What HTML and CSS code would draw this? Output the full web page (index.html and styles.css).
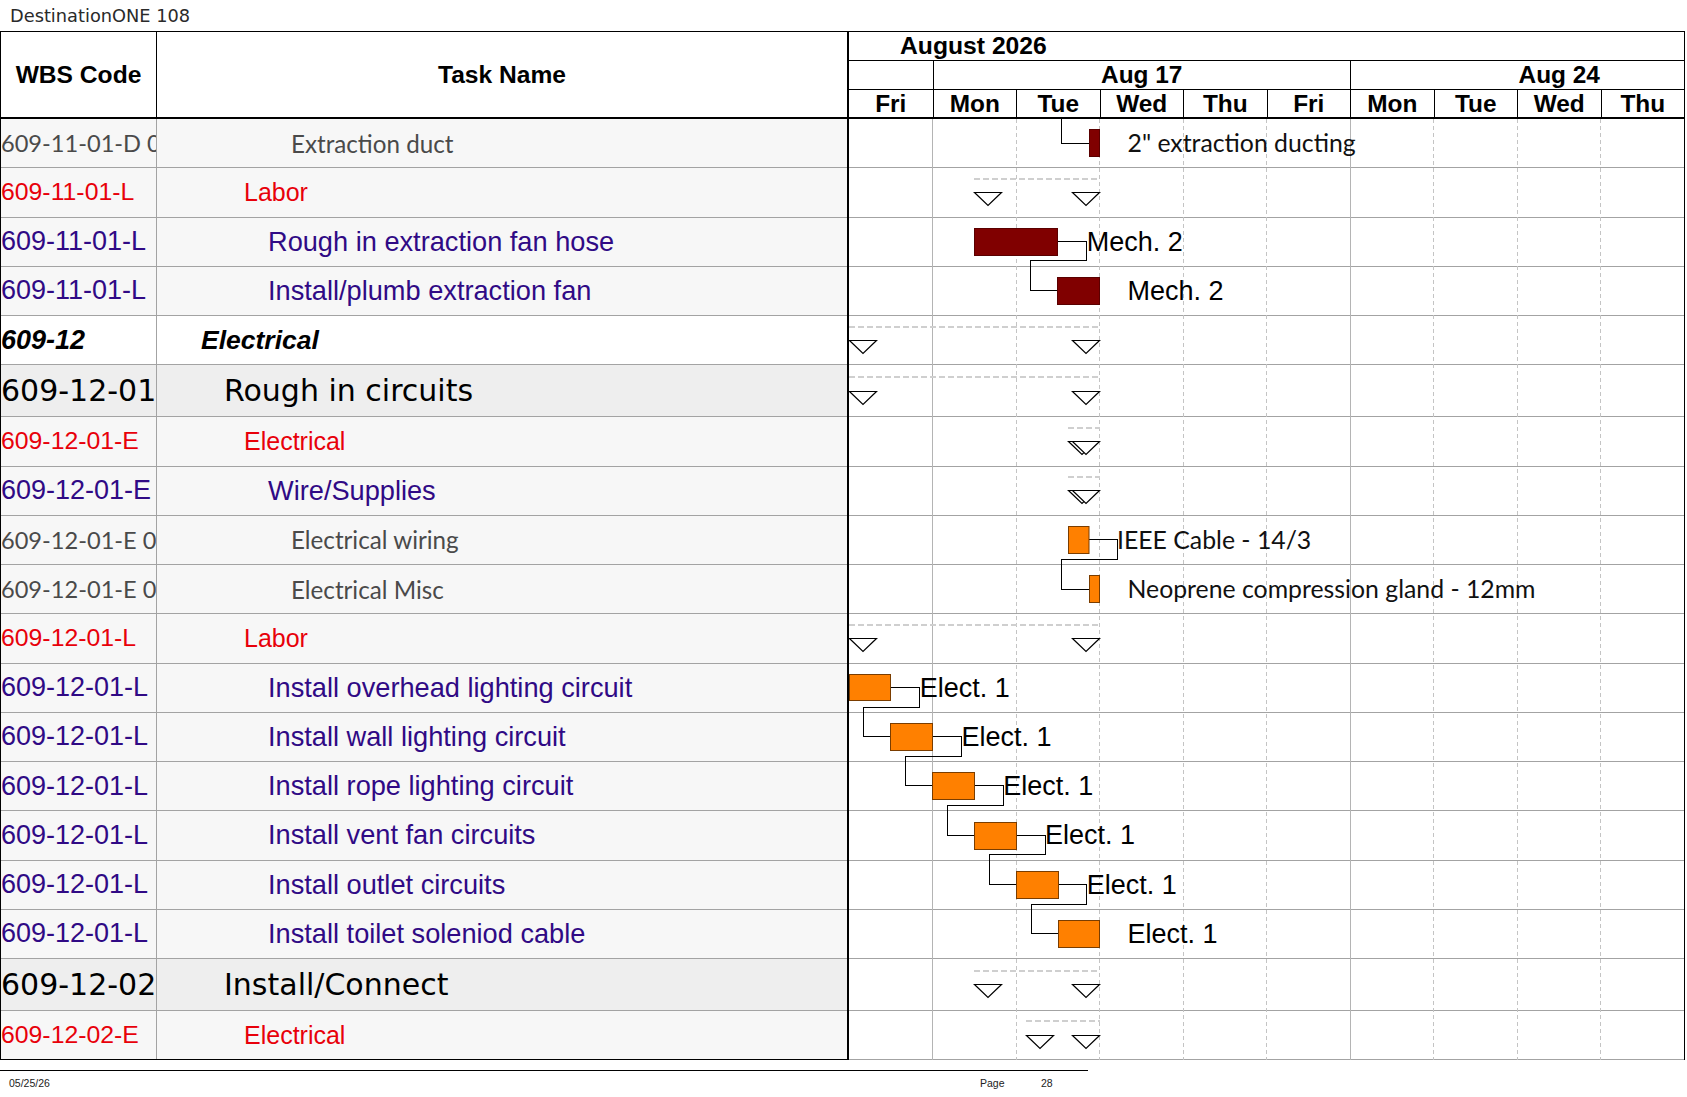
FILE: index.html
```html
<!DOCTYPE html>
<html lang="en">
<head>
<meta charset="utf-8">
<title>DestinationONE 108</title>
<link rel="stylesheet" href="styles.css">
</head>
<body>
<div class="title">DestinationONE 108</div>
<div class="sheet">
  <div class="left">
    <div class="lhead">
      <div class="hwbs">WBS Code</div>
      <div class="htask">Task Name</div>
    </div>
    <div class="row detail"><div class="wbs">609-11-01-D 001</div><div class="task">Extraction duct</div></div>
    <div class="row red"><div class="wbs">609-11-01-L</div><div class="task">Labor</div></div>
    <div class="row purple"><div class="wbs">609-11-01-L</div><div class="task">Rough in extraction fan hose</div></div>
    <div class="row purple"><div class="wbs">609-11-01-L</div><div class="task">Install/plumb extraction fan</div></div>
    <div class="row group"><div class="wbs">609-12</div><div class="task">Electrical</div></div>
    <div class="row big"><div class="wbs">609-12-01</div><div class="task">Rough in circuits</div></div>
    <div class="row red"><div class="wbs">609-12-01-E</div><div class="task">Electrical</div></div>
    <div class="row purple"><div class="wbs">609-12-01-E</div><div class="task">Wire/Supplies</div></div>
    <div class="row detail"><div class="wbs">609-12-01-E 001</div><div class="task">Electrical wiring</div></div>
    <div class="row detail"><div class="wbs">609-12-01-E 002</div><div class="task">Electrical Misc</div></div>
    <div class="row red"><div class="wbs">609-12-01-L</div><div class="task">Labor</div></div>
    <div class="row purple"><div class="wbs">609-12-01-L</div><div class="task">Install overhead lighting circuit</div></div>
    <div class="row purple"><div class="wbs">609-12-01-L</div><div class="task">Install wall lighting circuit</div></div>
    <div class="row purple"><div class="wbs">609-12-01-L</div><div class="task">Install rope lighting circuit</div></div>
    <div class="row purple"><div class="wbs">609-12-01-L</div><div class="task">Install vent fan circuits</div></div>
    <div class="row purple"><div class="wbs">609-12-01-L</div><div class="task">Install outlet circuits</div></div>
    <div class="row purple"><div class="wbs">609-12-01-L</div><div class="task">Install toilet soleniod cable</div></div>
    <div class="row big"><div class="wbs">609-12-02</div><div class="task">Install/Connect</div></div>
    <div class="row red"><div class="wbs">609-12-02-E</div><div class="task">Electrical</div></div>
  </div>

  <div class="gantt">
    <div class="ghead">
      <div class="month">August 2026</div>
      <div class="weeks">
        <div class="wk w1"></div>
        <div class="wk w5">Aug 17</div>
        <div class="wk w5">Aug 24</div>
      </div>
      <div class="days">
        <div class="day">Fri</div><div class="day">Mon</div><div class="day">Tue</div><div class="day">Wed</div><div class="day">Thu</div>
        <div class="day">Fri</div><div class="day">Mon</div><div class="day">Tue</div><div class="day">Wed</div><div class="day">Thu</div>
      </div>
    </div>
    <div class="gbody">
      <div class="grow"></div><div class="grow"></div><div class="grow"></div><div class="grow"></div>
      <div class="grow"></div><div class="grow big"></div><div class="grow"></div><div class="grow"></div>
      <div class="grow"></div><div class="grow"></div><div class="grow"></div><div class="grow"></div>
      <div class="grow"></div><div class="grow"></div><div class="grow"></div><div class="grow"></div>
      <div class="grow"></div><div class="grow big"></div><div class="grow"></div>

      <svg class="chart" width="835" height="941" viewBox="0 0 835 941" xmlns="http://www.w3.org/2000/svg">
        <g class="grid-solid">
          <line x1="83.5" y1="0" x2="83.5" y2="941"/>
          <line x1="501.5" y1="0" x2="501.5" y2="941"/>
        </g>
        <g class="grid-dash">
          <line x1="167.5" y1="0" x2="167.5" y2="941"/>
          <line x1="250.5" y1="0" x2="250.5" y2="941"/>
          <line x1="334.5" y1="0" x2="334.5" y2="941"/>
          <line x1="417.5" y1="0" x2="417.5" y2="941"/>
          <line x1="584.5" y1="0" x2="584.5" y2="941"/>
          <line x1="668.5" y1="0" x2="668.5" y2="941"/>
          <line x1="751.5" y1="0" x2="751.5" y2="941"/>
        </g>

        <g class="sumline">
          <line x1="125" y1="60" x2="251" y2="60"/>
          <line x1="0" y1="208" x2="251" y2="208"/>
          <line x1="0" y1="258" x2="251" y2="258"/>
          <line x1="219" y1="309" x2="251" y2="309"/>
          <line x1="219" y1="358" x2="251" y2="358"/>
          <line x1="0" y1="506" x2="251" y2="506"/>
          <line x1="125" y1="852" x2="251" y2="852"/>
          <line x1="177" y1="902" x2="251" y2="902"/>
        </g>
        <g class="tri">
          <polygon points="125.5,73.5 152.5,73.5 139,86.5"/>
          <polygon points="223.5,73.5 250.5,73.5 237,86.5"/>
          <polygon points="0.5,221.5 27.5,221.5 14,234.5"/>
          <polygon points="223.5,221.5 250.5,221.5 237,234.5"/>
          <polygon points="0.5,272.5 27.5,272.5 14,285.5"/>
          <polygon points="223.5,272.5 250.5,272.5 237,285.5"/>
          <polygon points="219.5,322.5 246.5,322.5 233,335.5"/>
          <polygon points="223.5,322.5 250.5,322.5 237,335.5"/>
          <polygon points="219.5,371.5 246.5,371.5 233,384.5"/>
          <polygon points="223.5,371.5 250.5,371.5 237,384.5"/>
          <polygon points="0.5,519.5 27.5,519.5 14,532.5"/>
          <polygon points="223.5,519.5 250.5,519.5 237,532.5"/>
          <polygon points="125.5,865.5 152.5,865.5 139,878.5"/>
          <polygon points="223.5,865.5 250.5,865.5 237,878.5"/>
          <polygon points="177.5,916.5 204.5,916.5 191,929.5"/>
          <polygon points="223.5,916.5 250.5,916.5 237,929.5"/>
        </g>

        <g class="link">
          <polyline points="212.5,0 212.5,24.5 240.5,24.5"/>
          <polyline points="208.5,122.5 237.5,122.5 237.5,141.5 181.5,141.5 181.5,171.5 208.5,171.5"/>
          <polyline points="240,420.5 268.5,420.5 268.5,440.5 212.5,440.5 212.5,470.5 240.5,470.5"/>
          <polyline points="41.5,568.5 70.5,568.5 70.5,588.5 14.5,588.5 14.5,617.5 41.5,617.5"/>
          <polyline points="83.5,617.5 112.5,617.5 112.5,637.5 56.5,637.5 56.5,666.5 83.5,666.5"/>
          <polyline points="125.5,666.5 154.5,666.5 154.5,686.5 98.5,686.5 98.5,716.5 125.5,716.5"/>
          <polyline points="167.5,716.5 196.5,716.5 196.5,735.5 140.5,735.5 140.5,765.5 167.5,765.5"/>
          <polyline points="209.5,765.5 237.5,765.5 237.5,785.5 182.5,785.5 182.5,814.5 209.5,814.5"/>
        </g>

        <g class="bar-red">
          <rect x="240.5" y="10.5" width="10" height="27"/>
          <rect x="125.5" y="109.5" width="83" height="27"/>
          <rect x="208.5" y="158.5" width="42" height="27"/>
        </g>
        <g class="bar-orange">
          <rect x="219.5" y="407.5" width="20.5" height="27"/>
          <rect x="240.5" y="456.5" width="10" height="27"/>
          <rect x="0.5" y="555.5" width="41" height="26"/>
          <rect x="41.5" y="604.5" width="42" height="27"/>
          <rect x="83.5" y="653.5" width="42" height="27"/>
          <rect x="125.5" y="703.5" width="42" height="27"/>
          <rect x="167.5" y="752.5" width="42" height="27"/>
          <rect x="209.5" y="801.5" width="41" height="27"/>
        </g>
      </svg>

      <span class="lbl cal" style="left:278.5px;top:0px">2" extraction ducting</span>
      <span class="lbl" style="left:237.75px;top:98.5px">Mech. 2</span>
      <span class="lbl" style="left:278.5px;top:147.75px">Mech. 2</span>
      <span class="lbl cal" style="left:268px;top:396.75px">IEEE Cable - 14/3</span>
      <span class="lbl cal" style="left:278.5px;top:446px">Neoprene compression gland - 12mm</span>
      <span class="lbl" style="left:70.75px;top:544.5px">Elect. 1</span>
      <span class="lbl" style="left:112.5px;top:593.75px">Elect. 1</span>
      <span class="lbl" style="left:154.25px;top:643px">Elect. 1</span>
      <span class="lbl" style="left:196px;top:692.25px">Elect. 1</span>
      <span class="lbl" style="left:237.75px;top:741.5px">Elect. 1</span>
      <span class="lbl" style="left:278.5px;top:790.75px">Elect. 1</span>
    </div>
  </div>
</div>
<div class="footer">
  <span class="fdate">05/25/26</span>
  <span class="fpage">Page</span>
  <span class="fnum">28</span>
</div>
</body>
</html>
```

FILE: styles.css
```css
* { box-sizing: border-box; }
html, body { margin: 0; padding: 0; background: #fff; overflow: hidden; }
body {
  width: 1687px;
  height: 1097px;
  font-family: "Liberation Sans", Arial, sans-serif;
  color: #000;
}

.title {
  height: 31px;
  padding-left: 10px;
  font-family: "DejaVu Sans", sans-serif;
  font-size: 17.8px;
  line-height: 31px;
  color: #2a2a2a;
}

.sheet {
  display: flex;
  width: 1685px;
  border-top: 1px solid #000;
}

/* ---------- left table ---------- */
.left {
  width: 847px;
  border-left: 1px solid #000;
}
.lhead {
  display: flex;
  height: 87px;
  border-bottom: 2px solid #000;
  background: #fff;
  font-weight: bold;
  font-size: 24.6px;
}
.hwbs {
  width: 156px;
  border-right: 1px solid #000;
  display: flex;
  align-items: center;
  justify-content: center;
}
.htask {
  flex: 1;
  display: flex;
  align-items: center;
  justify-content: center;
}

.row {
  display: flex;
  height: 49.25px;
  border-bottom: 1px solid #a3a3a3;
  background: #f7f7f7;
  white-space: nowrap;
}
.row:last-child { border-bottom-color: #000; }
.wbs {
  width: 156px;
  flex: none;
  border-right: 1px solid #a3a3a3;
  display: flex;
  align-items: center;
  overflow: hidden;
}
.task {
  flex: 1;
  display: flex;
  align-items: center;
  overflow: hidden;
}

.row.detail { color: #4a4a4a; font-family: Lato, "Open Sans", sans-serif; }
.row.detail .wbs { font-size: 23.6px; }
.row.detail .task { font-size: 24.2px; padding-left: 134px; }

.row.red { color: #e8000a; }
.row.red .wbs { font-size: 24.8px; }
.row.red .task { font-size: 25px; padding-left: 87px; }

.row.purple { color: #300a85; }
.row.purple .wbs { font-size: 27px; }
.row.purple .task { font-size: 27.2px; padding-left: 111px; }

.row.group { background: #fff; font-weight: bold; font-style: italic; }
.row.group .wbs { font-size: 27px; }
.row.group .task { font-size: 26.5px; padding-left: 44px; }

.row.big { height: 52px; background: #eeeeee; font-family: "DejaVu Sans", sans-serif; font-size: 30px; }
.row.big .task { padding-left: 67px; }

/* ---------- gantt ---------- */
.gantt {
  width: 838px;
  border-left: 2px solid #000;
  border-right: 1px solid #000;
}
.ghead {
  font-weight: bold;
  font-size: 24.4px;
}
.month {
  height: 29px;
  line-height: 28px;
  padding-left: 51px;
  border-bottom: 1px solid #000;
  font-size: 24.7px;
}
.weeks {
  display: flex;
  height: 29px;
  border-bottom: 1px solid #000;
  overflow: hidden;
}
.wk {
  flex: none;
  line-height: 28px;
  text-align: center;
}
.wk.w1 { width: 83.5px; }
.wk.w5 { width: 417.5px; border-left: 1px solid #000; }
.days {
  display: flex;
  height: 29px;
  border-bottom: 2px solid #000;
}
.day {
  flex: none;
  width: 83.5px;
  line-height: 27px;
  text-align: center;
}
.day + .day { border-left: 1px solid #000; }

.gbody {
  position: relative;
}
.grow {
  height: 49.25px;
  border-bottom: 1px solid #a3a3a3;
}
.grow.big { height: 52px; }
.grow:last-child { border-bottom-color: #000; }

.chart {
  position: absolute;
  left: 0;
  top: 0;
  overflow: visible;
}
.grid-solid line { stroke: #b4b4b4; stroke-width: 1; shape-rendering: crispEdges; }
.grid-dash line { stroke: #c4c4c4; stroke-width: 1; stroke-dasharray: 4 3; shape-rendering: crispEdges; }
.sumline line { stroke: #cfcfcf; stroke-width: 2; stroke-dasharray: 6 3; }
.tri polygon { fill: #fff; stroke: #000; stroke-width: 1.2; }
.link polyline { fill: none; stroke: #000; stroke-width: 1; shape-rendering: crispEdges; }
.bar-red rect { fill: #800000; stroke: #5a0000; stroke-width: 1; }
.bar-orange rect { fill: #ff8000; stroke: #7a3d00; stroke-width: 1; }

.lbl {
  position: absolute;
  height: 48px;
  line-height: 48px;
  white-space: nowrap;
  font-size: 27px;
  color: #000;
}
.lbl.cal {
  font-family: Lato, "Open Sans", sans-serif;
  font-size: 24.8px;
  color: #111;
}

/* ---------- footer ---------- */
.footer {
  display: grid;
  grid-template-columns: 980px 61px auto;
  width: 1088px;
  margin-top: 10px;
  border-top: 1.5px solid #000;
  padding-top: 6px;
  font-size: 10.5px;
  line-height: 13px;
  color: #222;
}
.fdate { padding-left: 9px; }
```
